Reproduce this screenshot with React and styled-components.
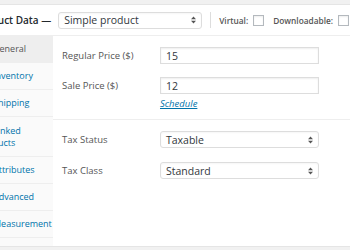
import React from 'react'
import styled, { createGlobalStyle } from 'styled-components'

const Global = createGlobalStyle`
  html, body {
    margin: 0;
    padding: 0;
    background: #f1f1f1;
    overflow: hidden;
    font-family: "Open Sans", "Liberation Sans", sans-serif;
  }
`

const Panel = styled.div`
  margin-top: 4px;
  margin-left: -28px;
  width: calc(100% + 28px);
  background: #fff;
  border-top: 1px solid #e5e5e5;
`

const Header = styled.div`
  display: flex;
  align-items: center;
  height: 30px;
  padding-left: 3px;
  border-bottom: 1px solid #eee;
  white-space: nowrap;
  & > * {
    flex-shrink: 0;
  }
`

const Title = styled.span`
  font-size: 10px;
  font-weight: 600;
  color: #23282d;
`

const SelectBox = styled.div`
  position: relative;
  display: flex;
  align-items: center;
  box-sizing: border-box;
  width: ${p => p.width}px;
  height: 17px;
  margin-left: ${p => p.gap || 0}px;
  padding-left: 5px;
  border: 1px solid #ddd;
  border-radius: 3px;
  background: #fff;
  box-shadow: inset 0 1px 2px rgba(0, 0, 0, 0.04);
  font-size: 10.5px;
  color: #32373c;
`

const Arrows = styled.svg`
  position: absolute;
  right: 5px;
  top: 50%;
  transform: translateY(-50%);
`

const Divider = styled.span`
  width: 1px;
  height: 16px;
  background: #ddd;
  margin: 0 8px;
`

const CheckLabel = styled.span`
  font-size: 8.3px;
  font-weight: 600;
  color: #555;
  margin-right: 5px;
`

const Check = styled.span`
  display: inline-block;
  box-sizing: border-box;
  width: 11px;
  height: 11px;
  border: 1px solid #b4b9be;
  background: #fff;
  box-shadow: inset 0 1px 2px rgba(0, 0, 0, 0.07);
  margin-right: 9px;
`

const Body = styled.div`
  display: flex;
  height: 210px;
`

const Nav = styled.ul`
  list-style: none;
  margin: 0;
  padding: 0;
  width: 81px;
  background: #fafafa;
`

const NavItem = styled.li`
  box-sizing: border-box;
  display: flex;
  align-items: center;
  height: ${p => (p.tall ? 40 : 27)}px;
  padding-left: 6px;
  text-indent: 15px;
  border-bottom: 1px solid #eee;
  background: ${p => (p.active ? '#eee' : 'transparent')};
  color: ${p => (p.active ? '#555' : '#0073aa')};
  font-size: 9px;
  line-height: 12px;
  white-space: nowrap;
`

const Content = styled.div`
  flex: 1;
  background: #fff;
`

const Group = styled.div`
  display: flex;
  flex-direction: column;
  gap: ${p => p.gap}px;
  padding: 11px 0 0 9px;
  height: ${p => p.h}px;
  box-sizing: border-box;
  border-bottom: ${p => (p.last ? 'none' : '1px solid #eee')};
`

const Row = styled.div`
  display: grid;
  grid-template-columns: 98px 159px;
  align-items: center;
`

const Label = styled.span`
  font-size: 9.5px;
  color: #555;
`

const Input = styled.div`
  box-sizing: border-box;
  height: 17px;
  display: flex;
  align-items: center;
  padding-left: 5px;
  border: 1px solid #ddd;
  background: #fff;
  box-shadow: inset 0 1px 2px rgba(0, 0, 0, 0.07);
  font-size: 10.5px;
  color: #32373c;
`

const Schedule = styled.a`
  grid-column: 2;
  margin-top: 3px;
  font-size: 9.5px;
  font-style: italic;
  color: #0073aa;
  text-decoration: underline;
`

const Footer = styled.div`
  height: 5px;
  background: #f1f1f1;
  border-top: 1px solid #e5e5e5;
`

function Select({ value, width, gap }) {
  return (
    <SelectBox width={width} gap={gap}>
      {value}
      <Arrows width="5" height="8" viewBox="0 0 5 8">
        <path d="M0 3.2 L2.5 0.4 L5 3.2 Z M0 4.8 L2.5 7.6 L5 4.8 Z" fill="#555" />
      </Arrows>
    </SelectBox>
  )
}

const tabs = ['General', 'Inventory', 'Shipping', 'Linked Products', 'Attributes', 'Advanced', 'Measurement']

export default function App() {
  return (
    <>
      <Global />
      <Panel>
        <Header>
          <Title>Product Data —</Title>
          <Select value="Simple product" width={144} gap={7} />
          <Divider />
          <CheckLabel>Virtual:</CheckLabel>
          <Check />
          <CheckLabel>Downloadable:</CheckLabel>
          <Check />
        </Header>
        <Body>
          <Nav>
            {tabs.map((t, i) =>
              t === 'Linked Products' ? (
                <NavItem key={t} tall>
                  <span>
                    Linked
                    <br />
                    <span style={{ display: 'inline-block', textIndent: 0 }}>Products</span>
                  </span>
                </NavItem>
              ) : (
                <NavItem key={t} active={i === 0}>
                  {t}
                </NavItem>
              )
            )}
          </Nav>
          <Content>
            <Group h={84} gap={13}>
              <Row>
                <Label>Regular Price ($)</Label>
                <Input>15</Input>
              </Row>
              <Row>
                <Label>Sale Price ($)</Label>
                <Input>12</Input>
                <Schedule>Schedule</Schedule>
              </Row>
            </Group>
            <Group h={125} gap={14} last>
              <Row>
                <Label>Tax Status</Label>
                <Select value="Taxable" width={159} />
              </Row>
              <Row>
                <Label>Tax Class</Label>
                <Select value="Standard" width={159} />
              </Row>
            </Group>
          </Content>
        </Body>
        <Footer />
      </Panel>
    </>
  )
}
